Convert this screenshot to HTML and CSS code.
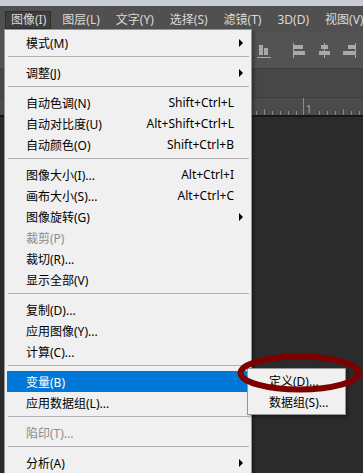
FILE: index.html
```html
<!DOCTYPE html>
<html lang="zh-CN">
<head>
  <meta charset="UTF-8">
  <title>图像菜单</title>
  <link rel="stylesheet" href="styles.css">
</head>
<body>
<div class="app">
  <div class="title-strip"></div>

  <div class="menubar">
    <span class="mb-item active">图像(I)</span>
    <span class="mb-item">图层(L)</span>
    <span class="mb-item">文字(Y)</span>
    <span class="mb-item">选择(S)</span>
    <span class="mb-item">滤镜(T)</span>
    <span class="mb-item">3D(D)</span>
    <span class="mb-item">视图(V)</span>
  </div>

  <!-- 选项栏：对齐按钮 -->
  <div class="options">
    <svg class="tool first" width="16" height="16" viewBox="0 0 16 16">
      <rect x="2" y="2" width="4" height="10"/>
      <rect x="7" y="5" width="4" height="7"/>
      <rect x="0" y="14" width="14" height="1"/>
    </svg>
    <svg class="tool" width="16" height="16" viewBox="0 0 16 16">
      <rect x="1" y="0" width="1" height="15"/>
      <rect x="2" y="2" width="9" height="4"/>
      <rect x="2" y="8" width="11" height="4"/>
    </svg>
    <svg class="tool" width="16" height="16" viewBox="0 0 16 16">
      <rect x="7" y="0" width="1" height="15"/>
      <rect x="4" y="2" width="7" height="4"/>
      <rect x="2" y="8" width="11" height="4"/>
    </svg>
    <svg class="tool" width="16" height="16" viewBox="0 0 16 16">
      <rect x="13" y="0" width="1" height="15"/>
      <rect x="6" y="2" width="7" height="4"/>
      <rect x="1" y="8" width="12" height="4"/>
    </svg>
  </div>

  <div class="tabs"></div>

  <div class="ruler">
    <svg width="363" height="17" viewBox="0 0 363 17">
      <g fill="#8a8a8a">
        <rect x="256" y="13" width="1" height="4"/>
        <rect x="264" y="11" width="1" height="6"/>
        <rect x="272" y="13" width="1" height="4"/>
        <rect x="280" y="13" width="1" height="4"/>
        <rect x="288" y="13" width="1" height="4"/>
        <rect x="296" y="13" width="1" height="4"/>
        <rect x="303" y="0" width="1" height="17"/>
        <rect x="319" y="13" width="1" height="4"/>
        <rect x="327" y="13" width="1" height="4"/>
        <rect x="335" y="13" width="1" height="4"/>
        <rect x="343" y="11" width="1" height="6"/>
        <rect x="351" y="13" width="1" height="4"/>
        <rect x="359" y="13" width="1" height="4"/>
      </g>
      <text x="306" y="15" class="ruler-num">1</text>
    </svg>
  </div>

  <div class="canvas"></div>

  <!-- 图像 下拉菜单 -->
  <div class="menu">
    <div class="item">模式(M)<i class="arrow"></i></div>
    <div class="sep"></div>
    <div class="item">调整(J)<i class="arrow"></i></div>
    <div class="sep"></div>
    <div class="item">自动色调(N)<span class="key">Shift+Ctrl+L</span></div>
    <div class="item">自动对比度(U)<span class="key">Alt+Shift+Ctrl+L</span></div>
    <div class="item">自动颜色(O)<span class="key">Shift+Ctrl+B</span></div>
    <div class="sep"></div>
    <div class="item">图像大小(I)...<span class="key">Alt+Ctrl+I</span></div>
    <div class="item">画布大小(S)...<span class="key">Alt+Ctrl+C</span></div>
    <div class="item">图像旋转(G)<i class="arrow"></i></div>
    <div class="item disabled">裁剪(P)</div>
    <div class="item">裁切(R)...</div>
    <div class="item">显示全部(V)</div>
    <div class="sep"></div>
    <div class="item">复制(D)...</div>
    <div class="item">应用图像(Y)...</div>
    <div class="item">计算(C)...</div>
    <div class="sep"></div>
    <div class="item hover">变量(B)</div>
    <div class="item">应用数据组(L)...</div>
    <div class="sep"></div>
    <div class="item disabled">陷印(T)...</div>
    <div class="sep"></div>
    <div class="item">分析(A)<i class="arrow"></i></div>
  </div>

  <!-- 变量 子菜单 -->
  <div class="submenu">
    <div class="item">定义(D)...</div>
    <div class="item">数据组(S)...</div>
  </div>

  <!-- 红圈标注 -->
  <svg class="mark" width="363" height="473" viewBox="0 0 363 473">
    <ellipse cx="299.5" cy="373" rx="59" ry="16.5" fill="none" stroke="#7d0000" stroke-width="6"/>
  </svg>
</div>
</body>
</html>
```

FILE: styles.css
```css
* {
  box-sizing: border-box;
}

html, body {
  margin: 0;
  padding: 0;
  overflow: hidden;
}

.app {
  position: relative;
  width: 363px;
  height: 473px;
  overflow: hidden;
  display: flex;
  flex-direction: column;
  background: #2b2b2b;
  font-family: "Noto Sans", "Noto Sans CJK SC", sans-serif;
  font-size: 12px;
}

.title-strip {
  height: 6px;
  background: #c9ced6;
}

/* 菜单栏 */
.menubar {
  height: 27px;
  display: flex;
  align-items: center;
  padding-left: 5px;
  gap: 5px;
  background: #505050;
  color: #dadada;
  white-space: nowrap;
}

.mb-item {
  height: 18px;
  line-height: 16px;
  padding: 0 4px 0 5px;
  border: 1px solid transparent;
}

.mb-item.active {
  background: #3e3e3e;
  border-color: #2f2f2f;
}

/* 选项栏 */
.options {
  height: 36px;
  display: flex;
  align-items: center;
  justify-content: flex-end;
  padding-right: 5px;
  background: #535353;
  border-bottom: 1px solid #3e3e3e;
}

.tool {
  fill: #a9a9a9;
  margin-left: 9px;
}

.tool.first {
  margin-right: 10px;
}

.tabs {
  height: 29px;
  background: #474747;
  border-bottom: 1px solid #3d3d3d;
}

.ruler {
  height: 19px;
  background: #4b4b4b;
  border-bottom: 2px solid #151515;
}

.ruler svg {
  display: block;
}

.ruler-num {
  font-size: 10px;
  fill: #a6a6a6;
}

.canvas {
  flex: 1;
  background: #2b2b2b;
}

/* 下拉菜单 */
.menu,
.submenu {
  position: absolute;
  background: #f0f0f0;
  border: 1px solid #979797;
  color: #000;
  box-shadow: 2px 2px 3px rgba(0, 0, 0, 0.35);
  white-space: nowrap;
}

.menu {
  left: 4px;
  top: 29px;
  width: 248px;
  padding: 2px;
}

.submenu {
  left: 247px;
  top: 368px;
  width: 99px;
  padding: 1px 2px 2px;
}

.item {
  display: flex;
  align-items: center;
  height: 21px;
  padding: 0 15px 0 19px;
}

.item.hover {
  background: #0078d7;
  color: #fff;
}

.item.disabled {
  color: #8d8d8d;
}

.key {
  margin-left: auto;
}

.arrow {
  margin-left: auto;
  margin-right: -9px;
  width: 0;
  height: 0;
  border-left: 4px solid #000;
  border-top: 4px solid transparent;
  border-bottom: 4px solid transparent;
}

.sep {
  height: 1px;
  margin: 3px 0 5px 1px;
  background: #b3b3b3;
}

.mark {
  position: absolute;
  left: 0;
  top: 0;
  pointer-events: none;
}
```
